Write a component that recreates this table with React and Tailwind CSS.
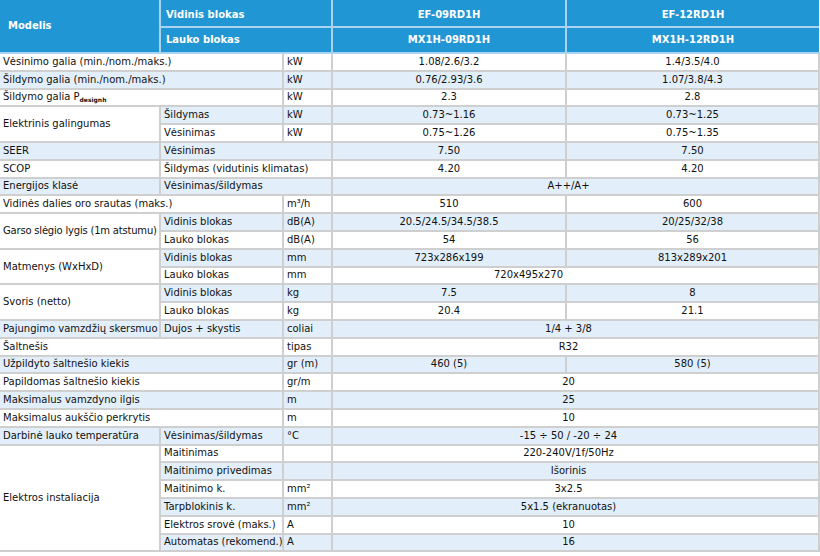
const HEAD = "bg-[#2196d4] text-white font-bold border-2 border-[#a9d3f0] px-[5px]";
const CELL = "border-2 border-[#cfcfcf] px-[3px] whitespace-nowrap overflow-hidden";
const VAL = CELL + " text-center";

// Each row: the cells in it, with spans. bg alternates by row number.
const rows = [
  [
    { t: "Vėsinimo galia (min./nom./maks.)", cs: 2, first: true },
    { t: "kW" },
    { t: "1.08/2.6/3.2", v: true },
    { t: "1.4/3.5/4.0", v: true },
  ],
  [
    { t: "Šildymo galia (min./nom./maks.)", cs: 2, first: true },
    { t: "kW" },
    { t: "0.76/2.93/3.6", v: true },
    { t: "1.07/3.8/4.3", v: true },
  ],
  [
    {
      t: (
        <>
          Šildymo galia P
          <span className="text-[6px] font-bold align-[-2px]">designh</span>
        </>
      ),
      cs: 2,
      first: true,
    },
    { t: "kW" },
    { t: "2.3", v: true },
    { t: "2.8", v: true },
  ],
  [
    { t: "Elektrinis galingumas", rs: 2, group: true, first: true },
    { t: "Šildymas" },
    { t: "kW" },
    { t: "0.73~1.16", v: true },
    { t: "0.73~1.25", v: true },
  ],
  [
    { t: "Vėsinimas" },
    { t: "kW" },
    { t: "0.75~1.26", v: true },
    { t: "0.75~1.35", v: true },
  ],
  [
    { t: "SEER", first: true },
    { t: "Vėsinimas", cs: 2 },
    { t: "7.50", v: true },
    { t: "7.50", v: true },
  ],
  [
    { t: "SCOP", first: true },
    { t: "Šildymas (vidutinis klimatas)", cs: 2 },
    { t: "4.20", v: true },
    { t: "4.20", v: true },
  ],
  [
    { t: "Energijos klasė", first: true },
    { t: "Vėsinimas/šildymas", cs: 2 },
    { t: "A++/A+", v: true, cs: 2 },
  ],
  [
    { t: "Vidinės dalies oro srautas (maks.)", cs: 2, first: true },
    { t: "m³/h" },
    { t: "510", v: true },
    { t: "600", v: true },
  ],
  [
    { t: "Garso slėgio lygis (1m atstumu)", rs: 2, group: true, first: true, narrow: true },
    { t: "Vidinis blokas" },
    { t: "dB(A)" },
    { t: "20.5/24.5/34.5/38.5", v: true },
    { t: "20/25/32/38", v: true },
  ],
  [
    { t: "Lauko blokas" },
    { t: "dB(A)" },
    { t: "54", v: true },
    { t: "56", v: true },
  ],
  [
    { t: "Matmenys (WxHxD)", rs: 2, group: true, first: true },
    { t: "Vidinis blokas" },
    { t: "mm" },
    { t: "723x286x199", v: true },
    { t: "813x289x201", v: true },
  ],
  [
    { t: "Lauko blokas" },
    { t: "mm" },
    { t: "720x495x270", v: true, cs: 2, shift: "pr-[97px]" },
  ],
  [
    { t: "Svoris (netto)", rs: 2, group: true, first: true },
    { t: "Vidinis blokas" },
    { t: "kg" },
    { t: "7.5", v: true },
    { t: "8", v: true },
  ],
  [
    { t: "Lauko blokas" },
    { t: "kg" },
    { t: "20.4", v: true },
    { t: "21.1", v: true },
  ],
  [
    { t: "Pajungimo vamzdžių skersmuo", first: true },
    { t: "Dujos + skystis" },
    { t: "coliai" },
    { t: "1/4 + 3/8", v: true, cs: 2 },
  ],
  [
    { t: "Šaltnešis", cs: 2, first: true },
    { t: "tipas" },
    { t: "R32", v: true, cs: 2 },
  ],
  [
    { t: "Užpildyto šaltnešio kiekis", cs: 2, first: true },
    { t: "gr (m)" },
    { t: "460 (5)", v: true },
    { t: "580 (5)", v: true },
  ],
  [
    { t: "Papildomas šaltnešio kiekis", cs: 2, first: true },
    { t: "gr/m" },
    { t: "20", v: true, cs: 2 },
  ],
  [
    { t: "Maksimalus vamzdyno ilgis", cs: 2, first: true },
    { t: "m" },
    { t: "25", v: true, cs: 2 },
  ],
  [
    { t: "Maksimalus aukščio perkrytis", cs: 2, first: true },
    { t: "m" },
    { t: "10", v: true, cs: 2 },
  ],
  [
    { t: "Darbinė lauko temperatūra", first: true },
    { t: "Vėsinimas/šildymas" },
    { t: "°C" },
    { t: "-15 ÷ 50 / -20 ÷ 24", v: true, cs: 2 },
  ],
  [
    { t: "Elektros instaliacija", rs: 6, group: true, first: true },
    { t: "Maitinimas" },
    { t: "" },
    { t: "220-240V/1f/50Hz", v: true, cs: 2 },
  ],
  [
    { t: "Maitinimo privedimas" },
    { t: "" },
    { t: "Išorinis", v: true, cs: 2 },
  ],
  [
    { t: "Maitinimo k." },
    { t: "mm²" },
    { t: "3x2.5", v: true, cs: 2 },
  ],
  [
    { t: "Tarpblokinis k." },
    { t: "mm²" },
    { t: "5x1.5 (ekranuotas)", v: true, cs: 2 },
  ],
  [
    { t: "Elektros srovė (maks.)" },
    { t: "A" },
    { t: "10", v: true, cs: 2 },
  ],
  [
    { t: "Automatas (rekomend.)" },
    { t: "A" },
    { t: "16", v: true, cs: 2 },
  ],
];

function Cell({ c, stripe }) {
  let cls = c.v ? VAL : CELL;
  if (c.group) cls += " bg-white";
  else cls += stripe ? " bg-[#e2eef9]" : " bg-white";
  if (c.v && c.cs === 2) cls += " " + (c.shift || "pr-[17px]");
  if (c.narrow) cls += " tracking-[-0.2px]";
  if (c.first) cls += " border-l-0";
  return (
    <td colSpan={c.cs || 1} rowSpan={c.rs || 1} className={cls}>
      {c.t}
    </td>
  );
}

export default function App() {
  return (
    <div className="w-[820px] bg-white font-['DejaVu_Sans','Verdana',sans-serif] text-[10px] text-[#111]">
      <table className="w-[819px] table-fixed border-collapse leading-none">
        <colgroup>
          <col className="w-[160px]" />
          <col className="w-[123px]" />
          <col className="w-[49px]" />
          <col className="w-[234px]" />
          <col className="w-[253px]" />
        </colgroup>
        <thead>
          <tr className="h-[27px]">
            <th rowSpan={2} className={HEAD + " pl-2 text-left border-t-0 border-l-0"}>
              Modelis
            </th>
            <th colSpan={2} className={HEAD + " pt-1 text-left border-t-0"}>
              Vidinis blokas
            </th>
            <th className={HEAD + " pt-1 text-center border-t-0"}>EF-09RD1H</th>
            <th className={HEAD + " pt-1 text-center border-t-0 border-r-0"}>EF-12RD1H</th>
          </tr>
          <tr className="h-[26px]">
            <th colSpan={2} className={HEAD + " text-left"}>
              Lauko blokas
            </th>
            <th className={HEAD + " text-center"}>MX1H-09RD1H</th>
            <th className={HEAD + " text-center border-r-0"}>MX1H-12RD1H</th>
          </tr>
        </thead>
        <tbody>
          {rows.map((r, i) => (
            <tr key={i} className="h-[17.8px]">
              {r.map((c, j) => (
                <Cell key={j} c={c} stripe={i % 2 === 1} />
              ))}
            </tr>
          ))}
        </tbody>
      </table>
    </div>
  );
}
